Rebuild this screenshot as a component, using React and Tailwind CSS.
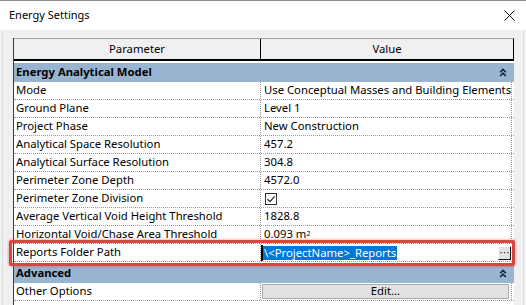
import React from 'react';

const rows = [
    { p: 'Mode', v: 'Use Conceptual Masses and Building Elements' },
    { p: 'Ground Plane', v: 'Level 1' },
    { p: 'Project Phase', v: 'New Construction' },
    { p: 'Analytical Space Resolution', v: '457.2' },
    { p: 'Analytical Surface Resolution', v: '304.8' },
    { p: 'Perimeter Zone Depth', v: '4572.0' },
    { p: 'Perimeter Zone Division', type: 'check' },
    { p: 'Average Vertical Void Height Threshold', v: '1828.8' },
    { p: 'Horizontal Void/Chase Area Threshold', type: 'area' },
];

function Chevrons() {
    return (
        <svg width="8" height="9" viewBox="0 0 8 9" className="mr-[7px]">
            <path d="M1.2 4.2 L4 1.4 L6.8 4.2 M1.2 8 L4 5.2 L6.8 8" fill="none" stroke="#17223b" strokeWidth="1.6" />
        </svg>
    );
}

function Category({ label }) {
    return (
        <div className="h-[21px] border-t-2 border-white bg-[#99b4d1] flex items-center justify-between pl-[2px]">
            <span className="font-bold text-black">{label}</span>
            <Chevrons />
        </div>
    );
}

function Row({ p, children }) {
    return (
        <div className="h-[18px] flex border-b border-dotted border-[#9a9a9a]">
            <div className="w-[247px] shrink-0 pl-[2px] flex items-center border-r border-dotted border-[#9a9a9a] whitespace-nowrap">{p}</div>
            <div className="flex-1 pl-[3px] flex items-center whitespace-nowrap border-r border-dotted border-[#9a9a9a] mr-[2px]">{children}</div>
        </div>
    );
}

export default function App() {
    return (
        <div className="w-[526px] h-[305px] bg-[#f0f0f0] relative overflow-hidden text-[11.3px] text-black" style={{ fontFamily: '"Noto Sans", "Open Sans", sans-serif' }}>
            <div className="h-[30px] bg-white border-t border-[#8a8a8a] flex items-center justify-between pl-[9px] pr-[11px]">
                <span className="text-[11px]">Energy Settings</span>
                <svg width="11" height="11" viewBox="0 0 11 11">
                    <path d="M0.5 0.5 L10.5 10.5 M10.5 0.5 L0.5 10.5" stroke="#111" strokeWidth="1" />
                </svg>
            </div>

            <div className="h-[275px] mx-[2px] border-x border-[#dcdcdc] pt-[8px] pl-[10px] pr-[8px]">
                <div className="w-[501px] h-full bg-white border-l border-[#3a3a3a]">
                    <div className="h-[23px] flex bg-[#f0f0f0] border-t border-[#a0a0a0] border-b-2 border-b-black border-r border-r-black">
                        <div className="w-[247px] shrink-0 flex items-center justify-center border-r border-black">Parameter</div>
                        <div className="flex-1 flex items-center justify-center">Value</div>
                    </div>

                    <Category label="Energy Analytical Model" />

                    {rows.map((r) => (
                        <Row key={r.p} p={r.p}>
                            {r.type === 'check' ? (
                                <div className="w-[12px] h-[12px] ml-[1px] border border-[#333] bg-white flex items-center justify-center">
                                    <svg width="10" height="10" viewBox="0 0 10 10">
                                        <path d="M1.5 5.2 L4 7.6 L8.6 2.4" fill="none" stroke="#222" strokeWidth="1.2" />
                                    </svg>
                                </div>
                            ) : r.type === 'area' ? (
                                <span>0.093 m<sup className="text-[7px] relative -top-[2px]">2</sup></span>
                            ) : (
                                r.v
                            )}
                        </Row>
                    ))}

                    <div className="h-[18px] flex border-b border-dotted border-[#9a9a9a]">
                        <div className="w-[247px] shrink-0 pl-[2px] flex items-center border-r border-dotted border-[#9a9a9a]">Reports Folder Path</div>
                        <div className="flex-1 flex items-center mr-[2px] pr-[1px]">
                            <div className="w-[2px] h-[16px] bg-black" />
                            <span className="bg-[#0078d7] text-white leading-[14px] px-[1px]">\&lt;ProjectName&gt;_Reports</span>
                            <div className="ml-auto w-[13px] h-[14px] bg-[#e3e3e3] border border-t-[#f8f8f8] border-l-[#f8f8f8] border-r-[#111] border-b-[#111] flex items-center justify-center">
                                <svg width="9" height="3" viewBox="0 0 9 3">
                                    <rect x="0.5" y="1" width="1.2" height="1.2" fill="#222" />
                                    <rect x="3.9" y="1" width="1.2" height="1.2" fill="#222" />
                                    <rect x="7.3" y="1" width="1.2" height="1.2" fill="#222" />
                                </svg>
                            </div>
                        </div>
                    </div>

                    <Category label="Advanced" />

                    <Row p="Other Options">
                        <div className="w-full mr-[1px] h-[15px] bg-[#e1e1e1] border border-[#adadad] flex items-center justify-center -ml-[2px]">Edit...</div>
                    </Row>
                </div>
            </div>

            <div className="absolute left-[9px] top-[240px] w-[506px] h-[26px] border-[3px] border-[#d9453f] rounded-[2px] shadow-[0_0_3px_rgba(217,69,63,0.7)]" />
        </div>
    );
}
